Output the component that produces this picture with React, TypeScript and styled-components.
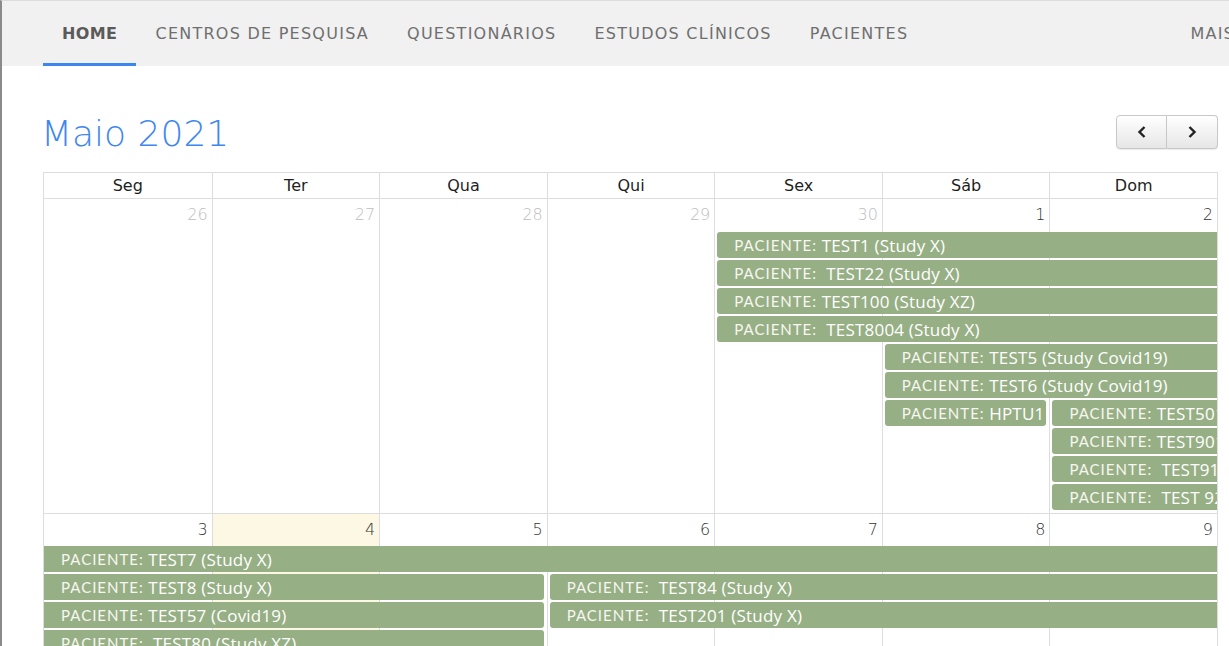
import React from "react";
import styled, { createGlobalStyle } from "styled-components";

const Global = createGlobalStyle`
  html, body { margin: 0; padding: 0; background: #fff; }
  body { font-family: "Noto Sans", sans-serif; overflow: hidden; }
`;

const Page = styled.div`
  border-left: 2px solid #8a8a8a;
  border-top: 1px solid #dcdcdc;
  min-height: 646px;
  box-sizing: border-box;
  overflow: hidden;
`;

const Nav = styled.nav`
  height: 65px;
  background: #f1f1f1;
  display: flex;
  align-items: stretch;
  padding-left: 41px;
`;

const NavItem = styled.a<{ $active?: boolean; $right?: boolean }>`
  display: flex;
  align-items: center;
  padding: 3px 19px 0;
  box-sizing: border-box;
  border-bottom: 3px solid ${(p) => (p.$active ? "#3b86f0" : "transparent")};
  margin-left: ${(p) => (p.$right ? "auto" : "0")};
  margin-right: ${(p) => (p.$right ? "-25px" : "0")};
  font-family: "DejaVu Sans", sans-serif;
  font-size: 16px;
  letter-spacing: ${(p) => (p.$active ? "0.4px" : "1.25px")};
  font-weight: ${(p) => (p.$active ? 600 : 400)};
  color: ${(p) => (p.$active ? "#5a5a5a" : "#6f6f6f")};
  white-space: nowrap;
  text-transform: uppercase;
`;

const Main = styled.main`
  padding: 50px 11px 0 41px;
`;

const Toolbar = styled.div`
  display: flex;
  align-items: center;
  justify-content: space-between;
  height: 36px;
  margin: -2px 0 22px;
`;

const Title = styled.h2`
  margin: 0 0 0 -2px;
  font-family: "DejaVu Sans", sans-serif;
  font-weight: 300;
  font-size: 36px;
  color: #3f87f0;
  line-height: 36px;
  position: relative;
  top: 2px;
`;

const BtnGroup = styled.div`
  display: flex;
`;

const NavBtn = styled.button<{ $pos: "left" | "right" }>`
  width: 51px;
  height: 34px;
  display: flex;
  align-items: center;
  justify-content: center;
  background: linear-gradient(#ffffff, #e6e6e6);
  border: 1px solid #c8c8c8;
  border-left-width: ${(p) => (p.$pos === "right" ? "0" : "1px")};
  border-radius: ${(p) => (p.$pos === "left" ? "4px 0 0 4px" : "0 4px 4px 0")};
  box-shadow: 0 1px 1px rgba(0,0,0,0.08);
  padding: 0;
  color: #222;
`;

const Table = styled.div`
  border: 1px solid #dddddd;
  border-bottom: none;
  width: 1175px;
  box-sizing: border-box;
`;

const HeadRow = styled.div`
  display: grid;
  grid-template-columns: repeat(7, 1fr);
  height: 25px;
  border-bottom: 1px solid #dddddd;
`;

const HeadCell = styled.div<{ $first?: boolean }>`
  border-left: ${(p) => (p.$first ? "none" : "1px solid #dddddd")};
  text-align: center;
  font-family: "DejaVu Sans", sans-serif;
  font-size: 16px;
  line-height: 26px;
  color: #1e1e1e;
`;

const Week = styled.div<{ $rows: number; $top: number }>`
  display: grid;
  grid-template-columns: repeat(7, 1fr);
  grid-template-rows: ${(p) => p.$top}px repeat(${(p) => p.$rows}, 28px) 1px;
  border-bottom: 1px solid #dddddd;
`;

const DayBg = styled.div<{ $col: number; $today?: boolean }>`
  grid-row: 1 / -1;
  grid-column: ${(p) => p.$col + 1};
  border-left: ${(p) => (p.$col === 0 ? "none" : "1px solid #dddddd")};
  background: ${(p) => (p.$today ? "#fcf8e3" : "transparent")};
`;

const DayNum = styled.div<{ $col: number; $other?: boolean }>`
  grid-row: 1;
  grid-column: ${(p) => p.$col + 1};
  text-align: right;
  padding: 6px 4px 0 0;
  font-family: "DejaVu Sans", sans-serif;
  font-size: 16px;
  font-weight: 300;
  color: ${(p) => (p.$other ? "#bdbdbd" : "#333")};
  z-index: 1;
`;

const Event = styled.div<{ $start: number; $end: number; $row: number; $contStart?: boolean; $contEnd?: boolean }>`
  grid-column: ${(p) => p.$start + 1} / ${(p) => p.$end + 2};
  grid-row: ${(p) => p.$row + 2};
  align-self: start;
  z-index: 2;
  height: 26px;
  margin-left: ${(p) => (p.$contStart ? "0" : "3px")};
  margin-right: ${(p) => (p.$contEnd ? "0" : "3px")};
  border-radius: ${(p) => `${p.$contStart ? 0 : 3}px ${p.$contEnd ? 0 : 3}px ${p.$contEnd ? 0 : 3}px ${p.$contStart ? 0 : 3}px`};
  background: #97af85;
  color: #fff;
  padding-left: 17px;
  white-space: pre;
  overflow: hidden;
  display: flex;
  align-items: center;
  min-width: 0;
`;

const Label = styled.span`
  font-family: "Lato", sans-serif;
  font-size: 15px;
  letter-spacing: 1px;
  color: #f7f7f2;
`;

const Name = styled.span`
  font-family: "Open Sans", sans-serif;
  font-size: 17px;
  letter-spacing: 0.2px;
  color: #ffffff;
`;

type Ev = { name: string; s: number; e: number; r: number; cs?: boolean; ce?: boolean };

const week1Days = [
  { n: 26, o: true },
  { n: 27, o: true },
  { n: 28, o: true },
  { n: 29, o: true },
  { n: 30, o: true },
  { n: 1 },
  { n: 2 },
];
const week2Days = [{ n: 3 }, { n: 4, t: true }, { n: 5 }, { n: 6 }, { n: 7 }, { n: 8 }, { n: 9 }];

const week1Events: Ev[] = [
  { name: " TEST1 (Study X)", s: 4, e: 6, r: 0, ce: true },
  { name: "  TEST22 (Study X)", s: 4, e: 6, r: 1, ce: true },
  { name: " TEST100 (Study XZ)", s: 4, e: 6, r: 2, ce: true },
  { name: "  TEST8004 (Study X)", s: 4, e: 6, r: 3, ce: true },
  { name: " TEST5 (Study Covid19)", s: 5, e: 6, r: 4, ce: true },
  { name: " TEST6 (Study Covid19)", s: 5, e: 6, r: 5, ce: true },
  { name: " HPTU1 (Study X)", s: 5, e: 5, r: 6 },
  { name: " TEST501 (Study X)", s: 6, e: 6, r: 6, ce: true },
  { name: " TEST901 (Study X)", s: 6, e: 6, r: 7, ce: true },
  { name: "  TEST912 (Study X)", s: 6, e: 6, r: 8, ce: true },
  { name: "  TEST 92 (Study X)", s: 6, e: 6, r: 9, ce: true },
];

const week2Events: Ev[] = [
  { name: " TEST7 (Study X)", s: 0, e: 6, r: 0, cs: true, ce: true },
  { name: " TEST8 (Study X)", s: 0, e: 2, r: 1, cs: true },
  { name: "  TEST84 (Study X)", s: 3, e: 6, r: 1, ce: true },
  { name: " TEST57 (Covid19)", s: 0, e: 2, r: 2, cs: true },
  { name: "  TEST201 (Study X)", s: 3, e: 6, r: 2, ce: true },
  { name: "  TEST80 (Study XZ)", s: 0, e: 2, r: 3, cs: true },
];

const heads = ["Seg", "Ter", "Qua", "Qui", "Sex", "Sáb", "Dom"];

const Chevron = ({ dir }: { dir: "left" | "right" }) => (
  <svg width="14" height="14" viewBox="0 0 14 14">
    <path
      d={dir === "left" ? "M9.5 2 L4.5 7 L9.5 12" : "M4.5 2 L9.5 7 L4.5 12"}
      fill="none"
      stroke="#222"
      strokeWidth="2.4"
      strokeLinecap="butt"
      strokeLinejoin="miter"
    />
  </svg>
);

function WeekRow({ days, events, rows, top }: { days: { n: number; o?: boolean; t?: boolean }[]; events: Ev[]; rows: number; top: number }) {
  return (
    <Week $rows={rows} $top={top}>
      {days.map((d, i) => (
        <DayBg key={"bg" + i} $col={i} $today={d.t} />
      ))}
      {days.map((d, i) => (
        <DayNum key={"n" + i} $col={i} $other={d.o}>
          {d.n}
        </DayNum>
      ))}
      {events.map((ev, i) => (
        <Event key={i} $start={ev.s} $end={ev.e} $row={ev.r} $contStart={ev.cs} $contEnd={ev.ce}>
          <Label>PACIENTE:</Label>
          <Name>{ev.name}</Name>
        </Event>
      ))}
    </Week>
  );
}

export default function App() {
  return (
    <Page>
      <Global />
      <Nav>
        <NavItem $active>Home</NavItem>
        <NavItem>Centros de Pesquisa</NavItem>
        <NavItem>Questionários</NavItem>
        <NavItem>Estudos Clínicos</NavItem>
        <NavItem>Pacientes</NavItem>
        <NavItem $right>Mais</NavItem>
      </Nav>
      <Main>
        <Toolbar>
          <Title>Maio 2021</Title>
          <BtnGroup>
            <NavBtn $pos="left">
              <Chevron dir="left" />
            </NavBtn>
            <NavBtn $pos="right">
              <Chevron dir="right" />
            </NavBtn>
          </BtnGroup>
        </Toolbar>
        <Table>
          <HeadRow>
            {heads.map((h, i) => (
              <HeadCell key={h} $first={i === 0}>
                {h}
              </HeadCell>
            ))}
          </HeadRow>
          <WeekRow days={week1Days} events={week1Events} rows={10} top={33} />
          <WeekRow days={week2Days} events={week2Events} rows={4} top={32} />
        </Table>
      </Main>
    </Page>
  );
}
